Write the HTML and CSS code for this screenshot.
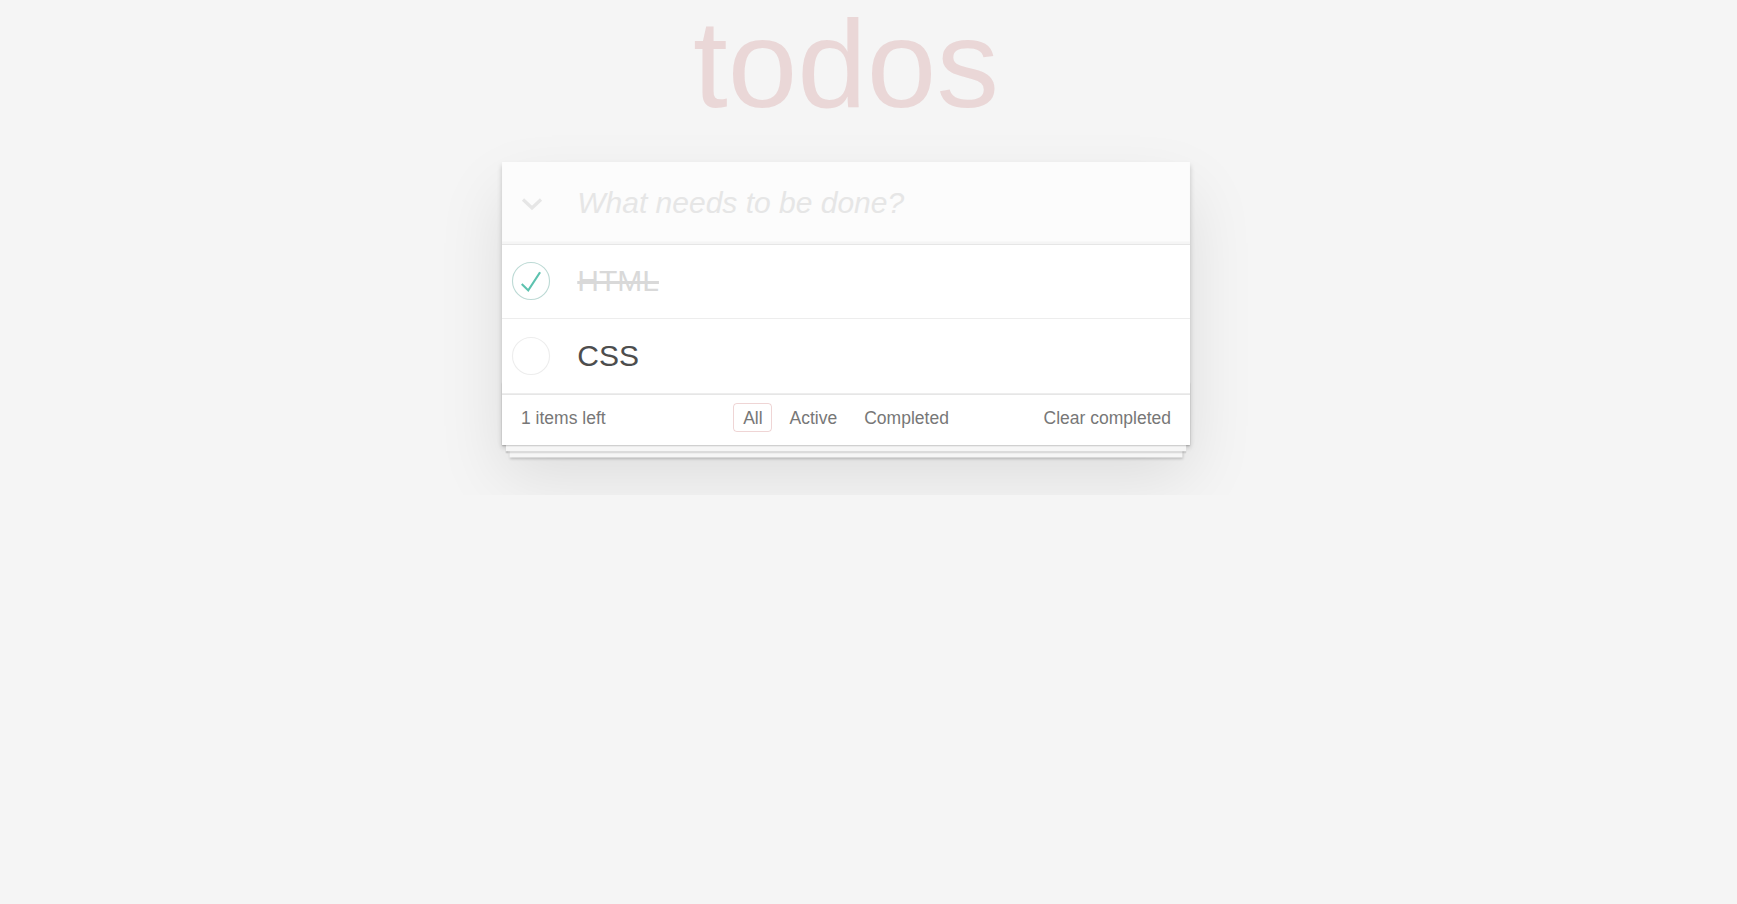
FILE: index.html
```html
<!DOCTYPE html>
<html lang="en">
<head>
<meta charset="utf-8">
<title>todos</title>
<link rel="stylesheet" href="styles.css">
</head>
<body>
<div class="page">
  <h1 class="title">todos</h1>
  <section class="todoapp">
    <header class="header">
      <span class="toggle-all">
        <svg width="22" height="14" viewBox="0 0 22 14"><polyline points="2,2.5 11,11 20,2.5" fill="none" stroke="#e6e6e6" stroke-width="3.2" stroke-linejoin="miter"/></svg>
      </span>
      <input class="new-todo" type="text" placeholder="What needs to be done?">
    </header>
    <ul class="todo-list">
      <li class="todo completed">
        <span class="toggle">
          <svg width="40" height="40" viewBox="-4 -4 108 108"><circle cx="50" cy="50" r="50" fill="none" stroke="#bddad5" stroke-width="3"/><path fill="#5dc2af" d="M72 25L42 71 27 56l-4 4 20 20 34-52z"/></svg>
        </span>
        <label class="todo-label">HTML</label>
      </li>
      <li class="todo">
        <span class="toggle">
          <svg width="40" height="40" viewBox="-4 -4 108 108"><circle cx="50" cy="50" r="50" fill="none" stroke="#ededed" stroke-width="3"/></svg>
        </span>
        <label class="todo-label">CSS</label>
      </li>
    </ul>
    <footer class="footer">
      <span class="todo-count"><strong class="count">1</strong> items left</span>
      <ul class="filters"><li class="filter"><a class="filter-link selected" href="#/">All</a></li><li class="filter"><a class="filter-link" href="#/active">Active</a></li><li class="filter"><a class="filter-link" href="#/completed">Completed</a></li></ul>
      <button class="clear-completed" type="button">Clear completed</button>
    </footer>
  </section>
</div>
</body>
</html>
```
FILE: styles.css
```css
html {
  margin: 0;
  padding: 0 45px 0 0;
  background: #f5f5f5;
}
body {
  margin: 0;
  padding: 0;
  background: #f5f5f5;
  font: 17.5px "Liberation Sans", Arial, Helvetica, sans-serif;
  line-height: 24.5px;
  color: #4d4d4d;
  font-weight: 300;
}
.page {
  max-width: 687.5px;
  margin: 0 auto;
}
.title {
  margin: 0;
  padding: 0;
  font-size: 125px;
  line-height: 128px;
  font-weight: 100;
  text-align: center;
  color: rgba(175, 47, 47, 0.15);
}
.todoapp {
  position: relative;
  margin: 33.5px 0 50px 0;
  background: #fff;
  box-shadow: 0 2.5px 5px 0 rgba(0, 0, 0, 0.2), 0 31.25px 62.5px 0 rgba(0, 0, 0, 0.1);
}
.header {
  display: flex;
  align-items: center;
  background: #fcfcfc;
  box-shadow: inset 0 -2.5px 1.25px rgba(0, 0, 0, 0.03);
}
.toggle-all {
  flex: 0 0 auto;
  display: flex;
  padding: 2px 0 0 19px;
  width: 56px;
  box-sizing: border-box;
}
.new-todo {
  flex: 1 1 auto;
  min-width: 0;
  margin: 0;
  padding: 20px 20px 20px 19px;
  border: none;
  outline: none;
  background: transparent;
  font-family: inherit;
  font-size: 30px;
  line-height: 42px;
  font-weight: 300;
  color: inherit;
}
.new-todo::placeholder {
  font-style: italic;
  font-weight: 300;
  color: #e6e6e6;
}
.todo-list {
  position: relative;
  z-index: 2;
  margin: 0;
  padding: 0;
  list-style: none;
  border-top: 1px solid #e6e6e6;
  background: #fff;
}
.todo {
  display: flex;
  align-items: center;
  font-size: 30px;
  border-bottom: 1px solid #ededed;
}
.toggle {
  flex: 0 0 57.5px;
  display: flex;
  justify-content: center;
  align-items: center;
}
.todo-label {
  display: block;
  flex: 1 1 auto;
  padding: 18.75px 18.75px 18.75px 17.5px;
  line-height: 36px;
  word-break: break-all;
}
.completed .todo-label {
  color: #d9d9d9;
  text-decoration: line-through;
}
.footer {
  position: relative;
  display: grid;
  grid-template-columns: 1fr auto 1fr;
  grid-template-rows: 25px;
  align-items: center;
  height: 25px;
  padding: 12.5px 18.75px;
  color: #777;
  border-top: 1px solid #e6e6e6;
}
.footer::before {
  content: "";
  position: absolute;
  right: 0;
  bottom: 0;
  left: 0;
  height: 62.5px;
  overflow: hidden;
  box-shadow: 0 1.25px 1.25px rgba(0, 0, 0, 0.2),
    0 10px 0 -3.75px #f6f6f6,
    0 11.25px 1.25px -3.75px rgba(0, 0, 0, 0.2),
    0 20px 0 -7.5px #f6f6f6,
    0 21.25px 2.5px -7.5px rgba(0, 0, 0, 0.2);
}
.todo-count {
  justify-self: start;
  text-align: left;
  margin-top: -2px;
}
.count {
  font-weight: 300;
}
.filters {
  display: flex;
  align-items: center;
  height: 25px;
  margin: 0;
  padding: 0;
  list-style: none;
}
.filter {
  display: flex;
}
.filter-link {
  display: block;
  margin: -3.5px 3.75px 0;
  padding: 2.5px 8.75px;
  line-height: 22px;
  color: inherit;
  text-decoration: none;
  border: 1px solid transparent;
  border-radius: 3.75px;
}
.filter-link.selected {
  border-color: rgba(175, 47, 47, 0.2);
}
.clear-completed {
  justify-self: end;
  margin: -2px 0 0;
  padding: 0;
  border: 0;
  background: none;
  font: inherit;
  font-weight: 300;
  line-height: 25px;
  color: inherit;
  cursor: pointer;
}
```
